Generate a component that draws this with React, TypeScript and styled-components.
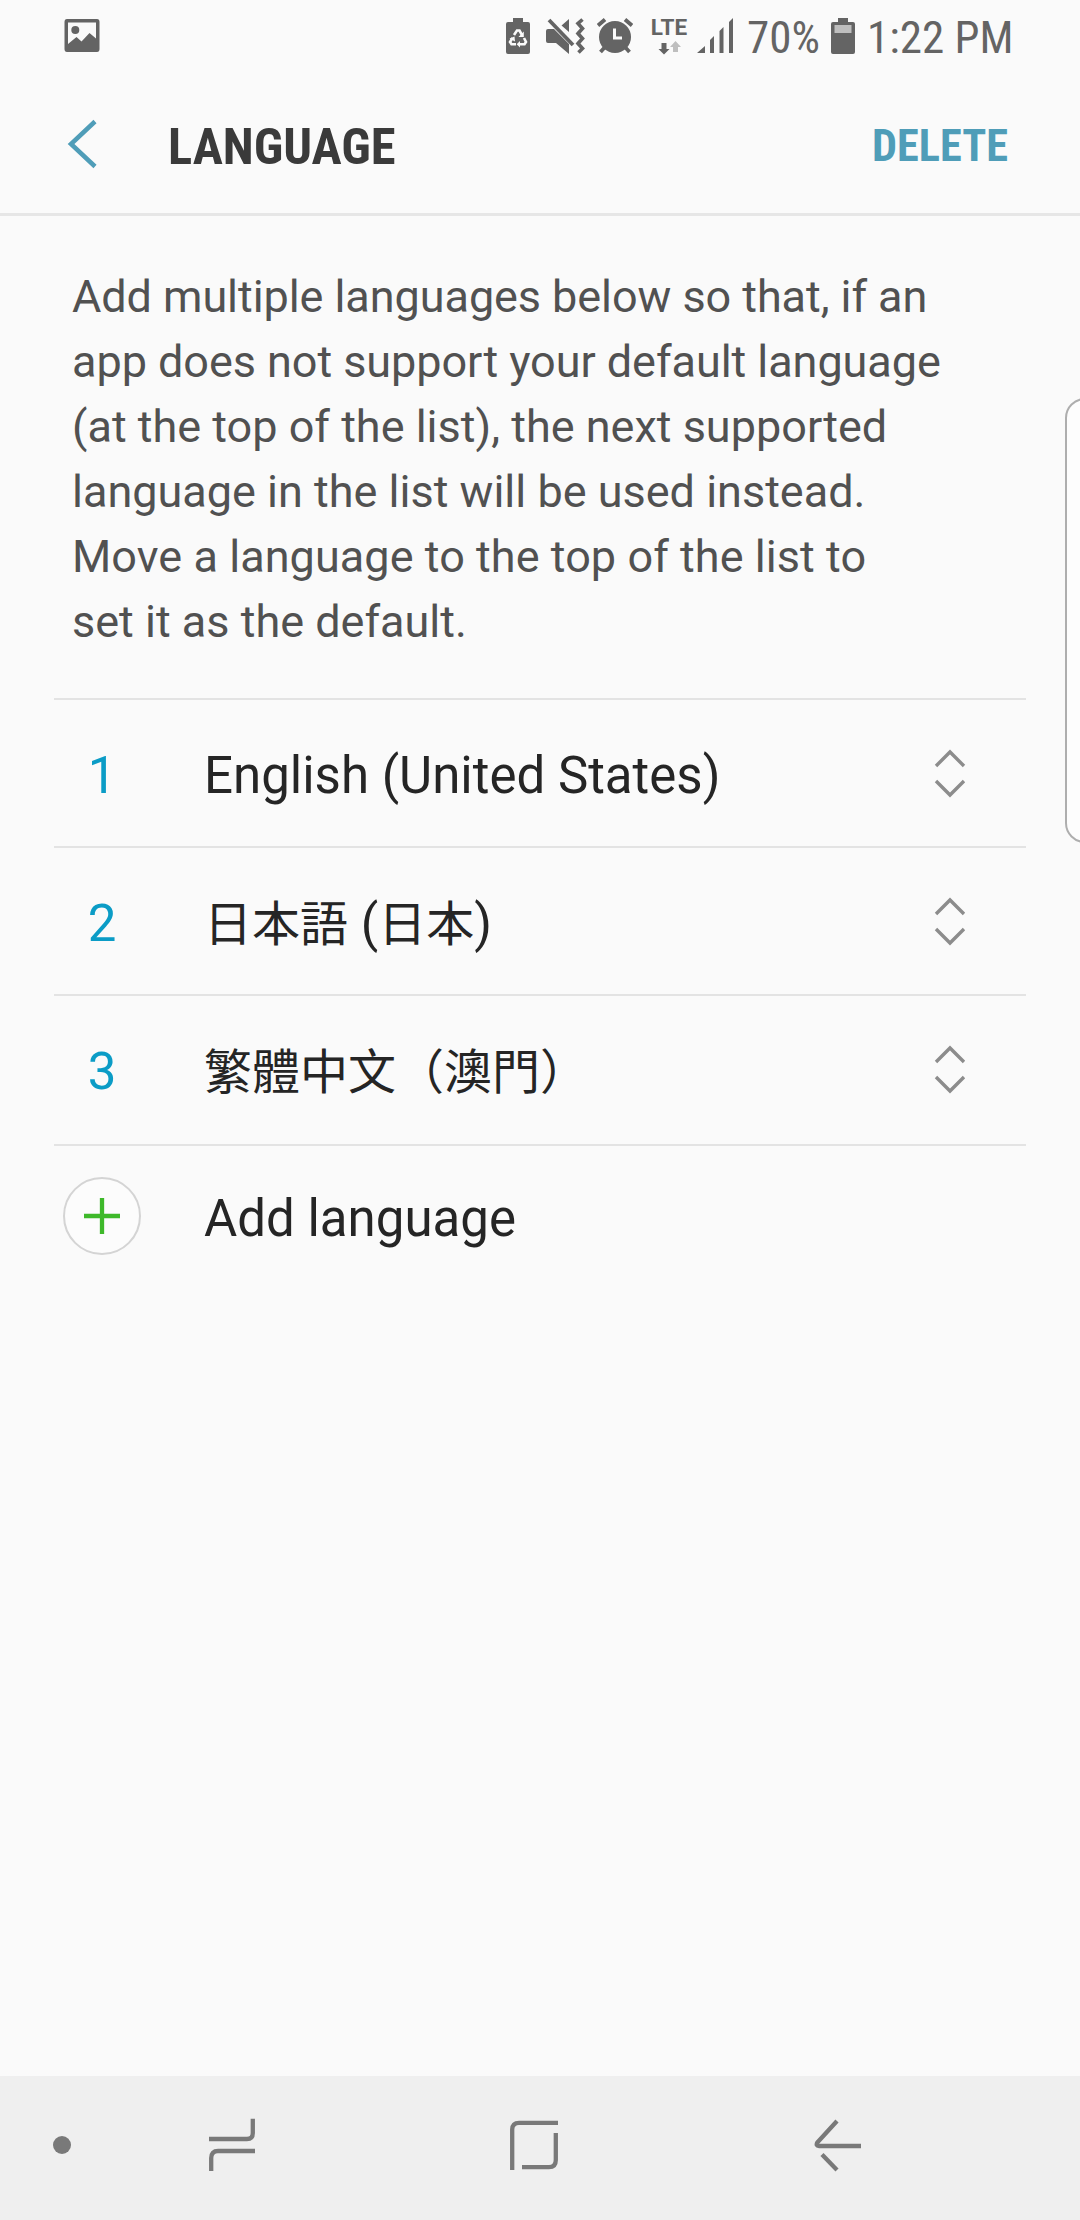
import React from "react";
import styled, { createGlobalStyle } from "styled-components";

const GlobalStyle = createGlobalStyle`
  *, *::before, *::after { box-sizing: border-box; }
  body { margin: 0; background: #fafafa; }
`;

const Screen = styled.div`
  position: relative;
  display: flex;
  flex-direction: column;
  width: 1080px;
  height: 2220px;
  overflow: hidden;
  background: #fafafa;
  color: #252525;
  font-family: Roboto, "Noto Sans CJK JP", sans-serif;
  svg { display: block; flex: none; }
`;

const StatusBar = styled.header`
  display: flex;
  align-items: flex-start;
  justify-content: space-between;
  height: 72px;
  padding: 18px 68px 0 64px;
  color: #646464;
`;

const StatusGroup = styled.div`
  display: flex;
  align-items: flex-start;
`;

const IconSlot = styled.div<{ $gap: number }>`
  margin-right: ${(p) => p.$gap}px;
`;

const Condensed = styled.span<{ $width: number; $size: number; $bold?: boolean; $gap?: number }>`
  display: block;
  width: ${(p) => p.$width}px;
  margin-right: ${(p) => p.$gap ?? 0}px;
  font-family: "Roboto Condensed", Roboto, sans-serif;
  font-stretch: 75%;
  font-size: ${(p) => p.$size}px;
  font-weight: ${(p) => (p.$bold ? 700 : 400)};
  line-height: 52px;
  white-space: nowrap;
`;

const StatusText = styled(Condensed)`
  margin-top: -6px;
`;

const Network = styled.div`
  display: flex;
  flex-direction: column;
  align-items: center;
  width: 38px;
  margin-right: 9px;
  font-size: 22.5px;
  font-weight: 700;
  line-height: 18px;
`;

const DataRow = styled.div`
  margin: 5px 0 0 2px;
`;

const TitleBar = styled.div`
  display: flex;
  align-items: center;
  height: 144px;
  padding: 0 72px 0 66px;
  border-bottom: 3px solid #e6e6e6;
`;

const BackButton = styled.button`
  width: 102px;
  margin-top: 2px;
  padding: 0;
  border: 0;
  background: none;
`;

const Title = styled.h1`
  flex: 1;
  margin: 9px 0 0;
  color: #3a3a3a;
`;

const DeleteButton = styled.button`
  margin-top: 6px;
  padding: 0;
  border: 0;
  background: none;
  color: #4f9db8;
  text-align: left;
`;

const Content = styled.main`
  flex: 1;
`;

const Description = styled.p`
  margin: 0;
  padding: 48px 100px 44px 72px;
  color: #515151;
  font-size: 45px;
  line-height: 65px;
`;

const Line = styled.span<{ $tracking: number }>`
  display: block;
  letter-spacing: ${(p) => p.$tracking}px;
`;

const List = styled.ol`
  margin: 0;
  padding: 0 54px;
  list-style: none;
`;

const Row = styled.li<{ $height: number }>`
  display: grid;
  grid-template-columns: 96px 1fr 152px;
  align-items: start;
  height: ${(p) => p.$height}px;
  border-top: 2px solid #e3e3e3;
`;

const Rank = styled.span`
  padding-top: 46px;
  color: #0b9cc6;
  font-size: 51px;
  line-height: 60px;
  text-align: center;
`;

const Name = styled.span`
  padding: 46px 0 0 54px;
  font-size: 51px;
  line-height: 60px;
  white-space: nowrap;
`;

const Ideographs = styled.span<{ $region: "JP" | "TC" }>`
  font-family: "Noto Sans CJK ${(p) => p.$region}", sans-serif;
  font-size: 48px;
  line-height: 1;
`;

const Handle = styled.span`
  padding: 49px 0 0 60px;
`;

const AddIcon = styled.span`
  padding: 30px 0 0 8px;
`;

const AddName = styled(Name)`
  padding-top: 43px;
`;

const EdgePanel = styled.aside`
  position: absolute;
  top: 398px;
  left: 1065px;
  width: 40px;
  height: 445px;
  border: 2px solid #aeaeae;
  border-radius: 20px;
  background: #fdfdfd;
`;

const NavBar = styled.nav`
  display: flex;
  align-items: center;
  height: 144px;
  padding: 0 219px 6px 53px;
  background: #efefef;
`;

const NavItem = styled.button<{ $gap: number }>`
  margin: 0 ${(p) => p.$gap}px 0 0;
  padding: 0;
  border: 0;
  background: none;
  color: #797979;
`;

const ImageIcon = () => (
  <svg width="36" height="35" viewBox="0 0 36 35">
    <path fill="currentColor" fillRule="evenodd" d="M3 1H33Q35.500 1 35.500 4V31Q35.500 34 33 34H3Q.5 34 .5 31V4Q.5 1 3 1ZM4 4.500V26L12.500 19L17.500 23.500L25.500 15L32 20.500V4.500Z" />
    <circle cx="11.300" cy="12" r="4" fill="currentColor" />
  </svg>
);

const BatterySaverIcon = () => (
  <svg width="24" height="36" viewBox="0 0 24 36">
    <path fill="currentColor" d="M7 0H17V4H22Q24 4 24 6V34Q24 36 22 36H2Q0 36 0 34V6Q0 4 2 4H7Z" />
    <g fill="none" stroke="#fafafa" strokeWidth="2.600">
      <path d="M8 17L11 12.500H13.500L16 17" />
      <path d="M18 20L20 24L18.500 26.300H13" />
      <path d="M10 26.300H5.500L4 24L6.500 20" />
    </g>
    <path fill="#fafafa" d="M17.800 13.500V19H12.500ZM14 23V29.500L10.700 26.300ZM3.500 20.500L8.500 18.500L9 23.500Z" />
  </svg>
);

const MuteVibrateIcon = () => (
  <svg width="39" height="36" viewBox="0 0 39 36">
    <path fill="currentColor" d="M0 13Q0 11 2 11H8L23 26V36L10 25H2Q0 25 0 23ZM23 1V14L15.500 7.500Z" />
    <path d="M3 2L27 27" stroke="currentColor" strokeWidth="3.800" />
    <path d="M36.500 1.500L32 5.500L36.500 10.500L32 15.500L36.500 20.500L32 25.500L36.500 30.500L32.500 34.500" fill="none" stroke="currentColor" strokeWidth="3.600" />
  </svg>
);

const AlarmIcon = () => (
  <svg width="36" height="36" viewBox="0 0 36 36">
    <circle cx="18" cy="19" r="16" fill="currentColor" />
    <path d="M1 7.500L8 1.500M28 1.500L35 7.500M8 29L3.500 34M28 29L32.500 34" stroke="currentColor" strokeWidth="3.800" />
    <path d="M17.500 10.500V20H25" fill="none" stroke="#fafafa" strokeWidth="3" />
  </svg>
);

const DataArrows = () => (
  <svg width="24" height="14" viewBox="0 0 24 14">
    <path fill="currentColor" d="M3.500 2H8.500V8H11.500L6 13.500L.5 8H3.500Z" />
    <path fill="#bebebe" d="M15 11V6H12L17.500 0L23 6H20V11Z" />
  </svg>
);

const SignalIcon = () => (
  <svg width="37" height="36" viewBox="0 0 37 36">
    <path fill="currentColor" d="M0 35L8 28V35ZM13 35V22L17 18V35ZM22.500 35V13L26.500 9V35ZM32 35V4L36 0V35Z" />
  </svg>
);

const BatteryIcon = () => (
  <svg width="24" height="36" viewBox="0 0 24 36">
    <path fill="currentColor" d="M7 0H17V4H22Q24 4 24 6V34Q24 36 22 36H2Q0 36 0 34V6Q0 4 2 4H7Z" />
    <rect x="3.500" y="7" width="17" height="8" fill="#bebebe" />
  </svg>
);

const BackChevron = () => (
  <svg width="32" height="50" viewBox="0 0 32 50">
    <path d="M29 2.500L5 25L29 47.500" fill="none" stroke="#4f9db8" strokeWidth="4.500" />
  </svg>
);

const ReorderIcon = () => (
  <svg width="32" height="50" viewBox="0 0 32 50">
    <path d="M2 17L16 3L30 17M2 32L16 46L30 32" fill="none" stroke="#8c8c8c" strokeWidth="3.400" />
  </svg>
);

const PlusIcon = () => (
  <svg width="80" height="80" viewBox="0 0 80 80">
    <circle cx="40" cy="40" r="38" fill="#fcfcfc" stroke="#d4d4d4" strokeWidth="2" />
    <path d="M22 40H58M40 22V58" stroke="#3eb92a" strokeWidth="4.300" />
  </svg>
);

const RecentsIcon = () => (
  <svg width="46" height="54" viewBox="0 0 46 54" fill="none" stroke="currentColor" strokeWidth="4.300">
    <path d="M43.800 .7V15Q43.800 21 38 21H0" />
    <path d="M46 33H9Q2.200 33 2.200 40V53" />
  </svg>
);

const HomeIcon = () => (
  <svg width="48" height="50" viewBox="0 0 48 50" fill="none" stroke="currentColor" strokeWidth="4.300">
    <path d="M2.200 50V9.500Q2.200 2.800 9 2.800H48" />
    <path d="M45.800 13V40Q45.800 47.200 39 47.200H12" />
  </svg>
);

const NavBackIcon = () => (
  <svg width="47" height="54" viewBox="0 0 47 54" fill="none" stroke="currentColor" strokeWidth="4.300">
    <path d="M23 3L3.300 24.500Q1.500 28 5 28H47" />
    <path d="M8 36.500L23 52" />
  </svg>
);

const description = [
  { text: "Add multiple languages below so that, if an", tracking: -0.07 },
  { text: "app does not support your default language", tracking: -0.055 },
  { text: "(at the top of the list), the next supported", tracking: 0 },
  { text: "language in the list will be used instead.", tracking: 0 },
  { text: "Move a language to the top of the list to", tracking: 0.055 },
  { text: "set it as the default.", tracking: 0 },
];

const languages = [
  { id: "en", height: 148, label: <>English (United States)</> },
  {
    id: "ja",
    height: 148,
    label: (
      <>
        <Ideographs $region="JP">日本語</Ideographs> (<Ideographs $region="JP">日本</Ideographs>)
      </>
    ),
  },
  { id: "zh", height: 150, label: <Ideographs $region="TC">繁體中文（澳門）</Ideographs> },
];

export default function App() {
  return (
    <Screen>
      <GlobalStyle />
      <StatusBar>
        <ImageIcon />
        <StatusGroup>
          <IconSlot $gap={16}><BatterySaverIcon /></IconSlot>
          <IconSlot $gap={12}><MuteVibrateIcon /></IconSlot>
          <IconSlot $gap={17}><AlarmIcon /></IconSlot>
          <Network>
            LTE
            <DataRow><DataArrows /></DataRow>
          </Network>
          <IconSlot $gap={13}><SignalIcon /></IconSlot>
          <StatusText $width={72} $size={45} $gap={12}>70%</StatusText>
          <IconSlot $gap={12}><BatteryIcon /></IconSlot>
          <StatusText $width={145} $size={45}>1:22 PM</StatusText>
        </StatusGroup>
      </StatusBar>
      <TitleBar>
        <BackButton aria-label="Back"><BackChevron /></BackButton>
        <Title><Condensed $width={228} $size={50.5} $bold>LANGUAGE</Condensed></Title>
        <DeleteButton><Condensed $width={136} $size={44.3} $bold>DELETE</Condensed></DeleteButton>
      </TitleBar>
      <Content>
        <Description>
          {description.map((line) => (
            <Line key={line.text} $tracking={line.tracking}>{line.text}</Line>
          ))}
        </Description>
        <List>
          {languages.map((l, i) => (
            <Row key={l.id} $height={l.height}>
              <Rank>{i + 1}</Rank>
              <Name>{l.label}</Name>
              <Handle><ReorderIcon /></Handle>
            </Row>
          ))}
          <Row $height={148}>
            <AddIcon><PlusIcon /></AddIcon>
            <AddName>Add language</AddName>
          </Row>
        </List>
      </Content>
      <NavBar>
        <NavItem $gap={138} aria-label="Hide navigation bar">
          <svg width="18" height="18" viewBox="0 0 18 18"><circle cx="9" cy="9" r="9" fill="currentColor" /></svg>
        </NavItem>
        <NavItem $gap={255} aria-label="Recents"><RecentsIcon /></NavItem>
        <NavItem $gap={256} aria-label="Home"><HomeIcon /></NavItem>
        <NavItem $gap={0} aria-label="Go back"><NavBackIcon /></NavItem>
      </NavBar>
      <EdgePanel />
    </Screen>
  );
}
